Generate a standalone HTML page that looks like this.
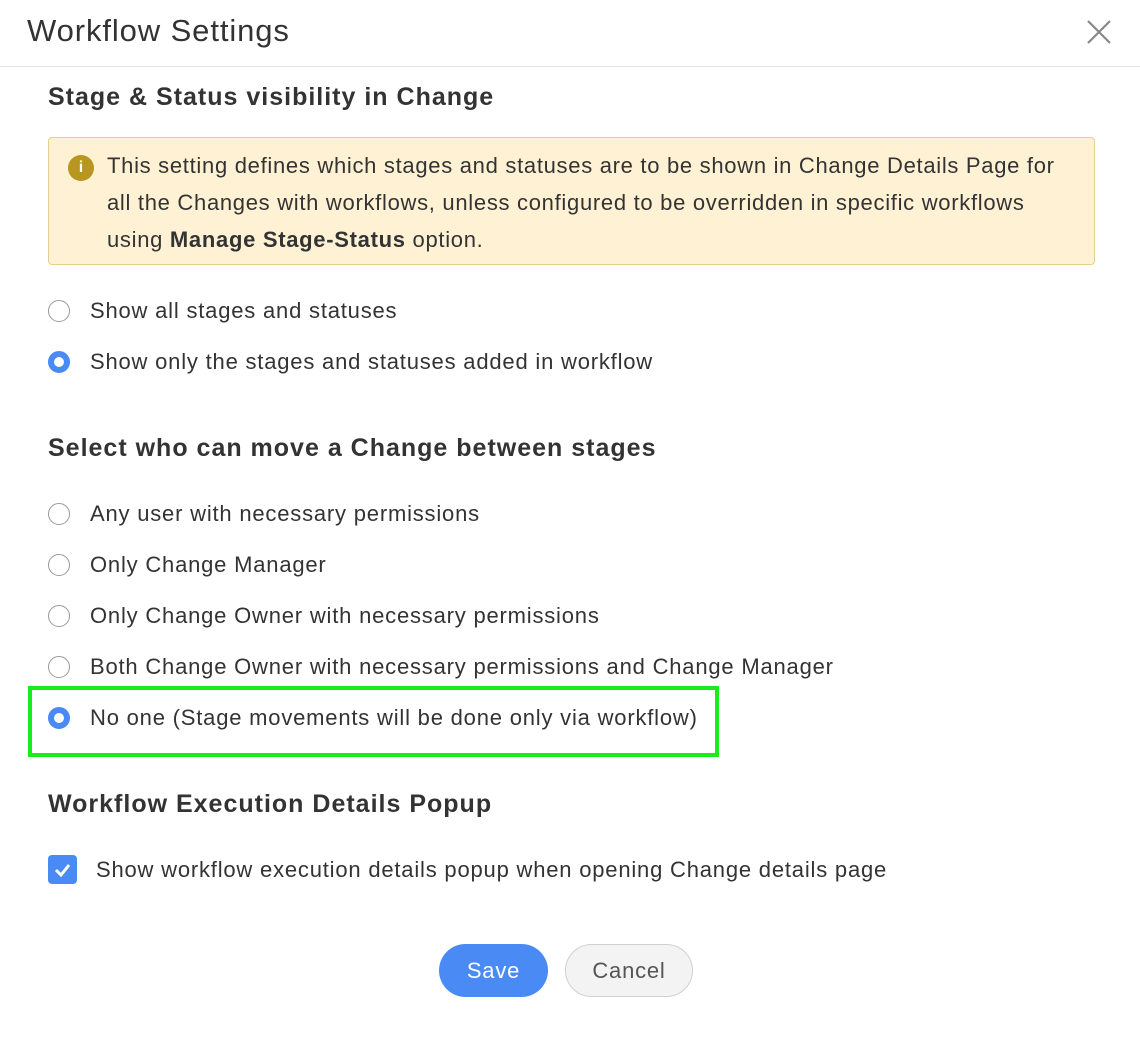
<!DOCTYPE html>
<html><head><style>
body{margin:0;width:1140px;height:1044px;background:#fff;font-family:"Liberation Sans",sans-serif;color:#333;position:relative;overflow:hidden}
.a{position:absolute;white-space:nowrap}
.t{font-size:22px;line-height:26px;letter-spacing:0.8px}
.h{font-size:25px;font-weight:bold;line-height:30px;letter-spacing:1px}
.r{position:absolute;left:48px;width:22px;height:22px;border:1.5px solid #999;border-radius:50%;box-sizing:border-box;background:#fff}
.r.on{border:6px solid #4a8af4;background:#fff}
</style></head><body>
<div class="a" style="left:27px;top:12px;font-size:31px;line-height:38px;color:#333;letter-spacing:0.9px">Workflow Settings</div>
<svg class="a" style="left:1086px;top:19px" width="26" height="26" viewBox="0 0 26 26"><path d="M2 2L24 24M24 2L2 24" stroke="#888" stroke-width="2.2"/></svg>
<div class="a" style="left:0;top:66px;width:1140px;height:1px;background:#e4e4e4"></div>
<div class="a h" style="left:48px;top:82px">Stage &amp; Status visibility in Change</div>
<div class="a" style="left:48px;top:137px;width:1047px;height:128px;background:#fff2d4;border:1px solid #e6cf8c;border-radius:4px;box-sizing:border-box"></div>
<div class="a" style="left:68px;top:155px;width:26px;height:26px;border-radius:50%;background:#b8961f;color:#fff;font-size:16px;font-weight:bold;text-align:center;line-height:26px">i</div>
<div class="a t" style="left:107px;top:147px;line-height:37px;letter-spacing:0.7px">This setting defines which stages and statuses are to be shown in Change Details Page for<br>all the Changes with workflows, unless configured to be overridden in specific workflows<br>using <b>Manage Stage-Status</b> option.</div>
<div class="r" style="top:300px"></div><div class="a t" style="left:90px;top:298px">Show all stages and statuses</div>
<div class="r on" style="top:351px"></div><div class="a t" style="left:90px;top:349px">Show only the stages and statuses added in workflow</div>
<div class="a h" style="left:48px;top:433px">Select who can move a Change between stages</div>
<div class="r" style="top:503px"></div><div class="a t" style="left:90px;top:501px">Any user with necessary permissions</div>
<div class="r" style="top:554px"></div><div class="a t" style="left:90px;top:552px">Only Change Manager</div>
<div class="r" style="top:605px"></div><div class="a t" style="left:90px;top:603px">Only Change Owner with necessary permissions</div>
<div class="r" style="top:656px"></div><div class="a t" style="left:90px;top:654px">Both Change Owner with necessary permissions and Change Manager</div>
<div class="a" style="left:28px;top:686px;width:691px;height:71px;border:4px solid #1aeb1a;box-sizing:border-box"></div>
<div class="r on" style="top:707px"></div><div class="a t" style="left:90px;top:705px">No one (Stage movements will be done only via workflow)</div>
<div class="a h" style="left:48px;top:789px">Workflow Execution Details Popup</div>
<div class="a" style="left:48px;top:855px;width:29px;height:29px;background:#4a8af4;border-radius:4px"></div>
<svg class="a" style="left:48px;top:855px" width="29" height="29"><path d="M8 15L13 20L21 10" stroke="#fff" stroke-width="3" fill="none"/></svg>
<div class="a t" style="left:96px;top:857px">Show workflow execution details popup when opening Change details page</div>
<div class="a" style="left:439px;top:944px;width:109px;height:53px;border-radius:27px;background:#4a8af4;color:#fff;font-size:22px;line-height:53px;text-align:center;letter-spacing:0.8px">Save</div>
<div class="a" style="left:565px;top:944px;width:128px;height:53px;border-radius:27px;background:#f3f3f3;border:1px solid #d0d0d0;box-sizing:border-box;color:#555;font-size:22px;line-height:51px;text-align:center;letter-spacing:0.8px">Cancel</div>
</body></html>
